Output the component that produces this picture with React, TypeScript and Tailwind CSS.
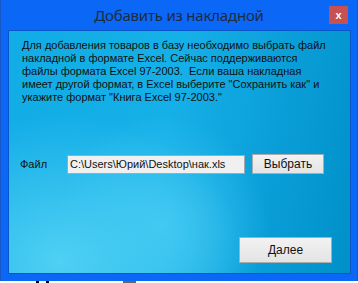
import React from "react";

const LINES = [
  "Для добавления товаров в базу необходимо выбрать файл",
  "накладной в формате Excel. Сейчас поддерживаются",
  "файлы формата Excel 97-2003.  Если ваша накладная",
  "имеет другой формат, в Excel выберите \"Сохранить как\" и",
  "укажите формат \"Книга Excel 97-2003.\"",
];

function CloseButton() {
  return (
    <div className="absolute right-[9px] top-[6px] flex h-[18px] w-[19px] items-center justify-center bg-[#c75050]">
      <span className="text-[11px] font-bold leading-none text-white">x</span>
    </div>
  );
}

export default function App() {
  return (
    <div className="relative h-[283px] w-[358px] overflow-hidden bg-white font-['Liberation_Sans',Arial,sans-serif]">
      <div className="flex h-[281px] w-[358px] flex-col border-l border-r border-[#1a55c4] bg-[#0b67f6]">
        <div className="relative flex h-[30px] items-center justify-center">
          <span className="font-['Noto_Sans',sans-serif] text-[15px] leading-none tracking-[-0.2px] text-[#1f2b40]">
            Добавить из накладной
          </span>
          <CloseButton />
        </div>
        <div className="ml-[7px] mr-[6px] flex h-[244px] flex-col border border-[#0a56c6] bg-[radial-gradient(ellipse_at_15%_95%,#4fd0f4_0%,transparent_45%),radial-gradient(ellipse_at_45%_80%,#3ac4f0_0%,transparent_40%),linear-gradient(100deg,#12ace6_0%,#16b0e8_45%,#0a9ed8_75%,#0090c8_100%)]">
          <div className="pl-[13px] pt-[8px] text-[11px] leading-[13px] text-[#101010]">
            {LINES.map((line) => (
              <div key={line} className="whitespace-pre">
                {line}
              </div>
            ))}
          </div>
          <div className="mt-[50px] flex items-center">
            <span className="ml-[11px] w-[47px] text-[11px] text-[#101010]">Файл</span>
            <div className="flex h-[19px] w-[178px] items-center border border-[#a8a8a8] bg-[#f0f0f0] pl-[2px] text-[11px] text-[#101010]">
              C:\Users\Юрий\Desktop\нак.xls
            </div>
            <button className="ml-[7px] h-[20px] w-[72px] border border-[#acacac] bg-[linear-gradient(#f2f2f2,#e4e4e4)] text-[12px] text-[#101010]">
              Выбрать
            </button>
          </div>
          <div className="mt-[63px] flex justify-end pr-[18px]">
            <button className="h-[26px] w-[93px] border border-[#acacac] bg-[linear-gradient(#f2f2f2,#e4e4e4)] text-[12px] text-[#101010]">
              Далее
            </button>
          </div>
        </div>
      </div>
      <div className="flex h-[2px] items-start">
        <div className="ml-[36px] h-[2px] w-[3px] bg-black" />
        <div className="ml-[7px] h-[2px] w-[3px] bg-black" />
        <div className="ml-[74px] h-[2px] w-[13px] bg-[#666]" />
      </div>
    </div>
  );
}
